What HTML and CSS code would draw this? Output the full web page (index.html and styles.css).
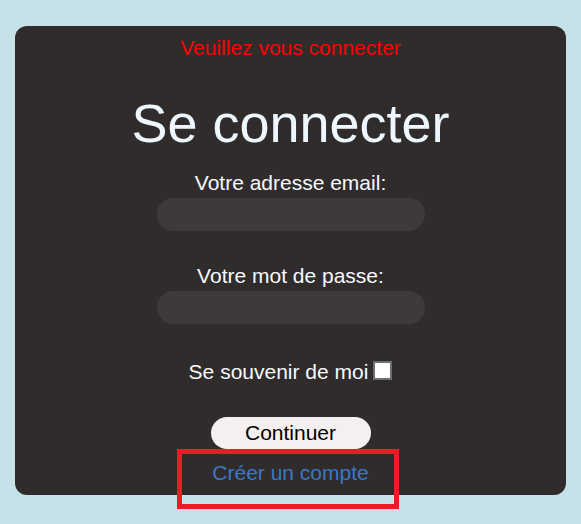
FILE: index.html
```html
<!DOCTYPE html>
<html lang="fr">
<head>
<meta charset="utf-8">
<title>Se connecter</title>
<link rel="stylesheet" href="styles.css">
</head>
<body>
<main class="card">
  <p class="alert">Veuillez vous connecter</p>
  <h1 class="title">Se connecter</h1>
  <form class="form">
    <label class="label" for="email">Votre adresse email:</label>
    <input class="field" id="email" type="email">
    <label class="label label-pass" for="pass">Votre mot de passe:</label>
    <input class="field" id="pass" type="password">
    <div class="remember">
      <label for="rem">Se souvenir de moi</label>
      <input class="check" id="rem" type="checkbox">
    </div>
    <button class="btn" type="button">Continuer</button>
    <a class="link" href="#">Créer un compte</a>
  </form>
</main>
<div class="highlight"></div>
</body>
</html>
```
FILE: styles.css
```css
html, body {
  margin: 0;
  padding: 0;
}
body {
  background: #c5e2e8;
  font-family: "Liberation Sans", Arial, sans-serif;
  padding: 26px 15px 0;
  height: 524px;
  box-sizing: border-box;
  position: relative;
}
.card {
  background: #302c2b;
  border-radius: 12px;
  display: flex;
  flex-direction: column;
  align-items: center;
  padding: 10px 0 10px;
}
.alert {
  margin: 0;
  color: #ff0000;
  font-size: 21px;
  line-height: 24px;
}
.title {
  margin: 32px 0 0;
  color: #eef6ff;
  font-size: 54px;
  font-weight: normal;
  line-height: 62px;
}
.form {
  display: flex;
  flex-direction: column;
  align-items: center;
  margin-top: 17px;
}
.label {
  color: #f6f9ff;
  font-size: 21px;
  line-height: 24px;
}
.label-pass {
  margin-top: 33px;
}
.field {
  margin-top: 3px;
  width: 268px;
  height: 33px;
  box-sizing: border-box;
  border: none;
  border-radius: 16px;
  background: #3e3a39;
  outline: none;
}
.remember {
  margin-top: 36px;
  display: flex;
  align-items: center;
  color: #f6f9ff;
  font-size: 21px;
  line-height: 24px;
}
.check {
  appearance: none;
  -webkit-appearance: none;
  margin: 0 0 4px 5px;
  width: 19px;
  height: 19px;
  background: #ffffff;
  border: 2px solid #6e6e6e;
  box-sizing: border-box;
}
.btn {
  margin-top: 33px;
  width: 160px;
  height: 32px;
  border: none;
  border-radius: 16px;
  background: #f5f0ef;
  color: #000000;
  font-family: "Liberation Sans", Arial, sans-serif;
  font-size: 21px;
  padding: 0;
}
.link {
  margin-top: 12px;
  color: #3a78c4;
  font-size: 21px;
  line-height: 24px;
  text-decoration: none;
}
.highlight {
  position: absolute;
  left: 177px;
  top: 449px;
  width: 222px;
  height: 60px;
  box-sizing: border-box;
  border: 5px solid #ed1c24;
}
```
